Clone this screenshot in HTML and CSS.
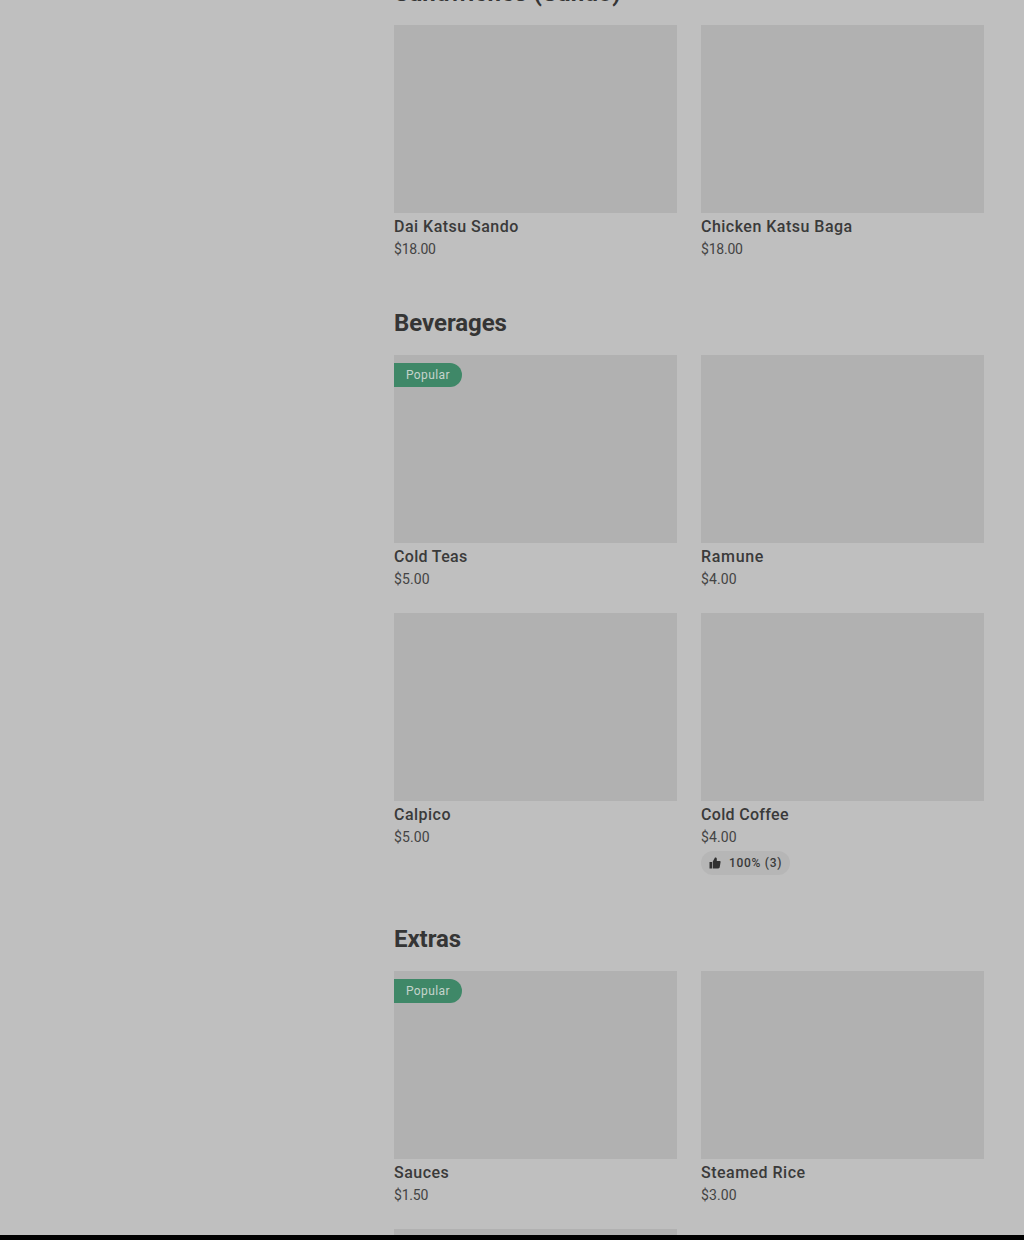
FILE: index.html
```html
<!DOCTYPE html>
<html lang="en">
<head>
<meta charset="utf-8">
<title>Menu</title>
<link rel="stylesheet" href="styles.css">
</head>
<body>
<main class="menu">
  <section class="section section-first">
    <h2 class="heading heading-sandwiches">Sandwiches (Sando)</h2>
    <div class="grid">
      <article class="card"><div class="photo"></div><h3 class="name">Dai Katsu Sando</h3><p class="price price-long">$18.00</p></article>
      <article class="card"><div class="photo"></div><h3 class="name">Chicken Katsu Baga</h3><p class="price price-long">$18.00</p></article>
    </div>
  </section>
  <section class="section">
    <h2 class="heading">Beverages</h2>
    <div class="grid">
      <article class="card"><div class="photo"><span class="popular">Popular</span></div><h3 class="name name-tight">Cold Teas</h3><p class="price">$5.00</p></article>
      <article class="card"><div class="photo"></div><h3 class="name name-wide">Ramune</h3><p class="price">$4.00</p></article>
      <article class="card"><div class="photo"></div><h3 class="name">Calpico</h3><p class="price">$5.00</p></article>
      <article class="card"><div class="photo"></div><h3 class="name name-tight">Cold Coffee</h3><p class="price">$4.00</p>
        <div class="rating"><svg class="thumb" viewBox="0 0 12 12" aria-hidden="true"><path d="M.5 5h2.6v6.5H.5zM3.8 4.6 6 .4h.5c.8 0 1.3.6 1.3 1.3V4h2.8c.7 0 1.1.5 1 1.1l-.9 5.2c-.1.7-.7 1.2-1.4 1.2H3.8z"/></svg><span>100% (3)</span></div>
      </article>
    </div>
  </section>
  <section class="section">
    <h2 class="heading">Extras</h2>
    <div class="grid">
      <article class="card"><div class="photo"><span class="popular">Popular</span></div><h3 class="name">Sauces</h3><p class="price price-long">$1.50</p></article>
      <article class="card"><div class="photo"></div><h3 class="name">Steamed Rice</h3><p class="price">$3.00</p></article>
      <article class="card"><div class="photo"></div></article>
    </div>
  </section>
</main>
<footer class="bottom-bar"></footer>
</body>
</html>
```
FILE: styles.css
```css
* { box-sizing: border-box; }
html { overflow: hidden; }
body {
  margin: 0;
  height: 1240px;
  display: flex;
  flex-direction: column;
  overflow: hidden;
  background: #bfbfbf;
  color: #3a3a3a;
  font-family: Roboto, "Liberation Sans", sans-serif;
}
.menu { flex: 1; min-height: 0; overflow: hidden; padding: 0 40px 0 394px; }
.section { padding-top: 48px; }
.section-first { padding-top: 0; margin-top: -23px; }
.heading {
  margin: 0 0 16px;
  font-size: 24px;
  font-weight: 700;
  line-height: 32px;
  letter-spacing: -.05px;
  color: #353535;
}
.heading-sandwiches { letter-spacing: .35px; }
.grid { display: grid; grid-template-columns: 1fr 1fr; gap: 24px; }
.photo { height: 188px; padding-top: 8px; background: #b1b1b1; }
.name { margin: 0; font-size: 16px; font-weight: 500; line-height: 27px; letter-spacing: .48px; }
.name-tight { letter-spacing: .32px; }
.name-wide { letter-spacing: .68px; }
.price { margin: 0; font-size: 14px; font-weight: 400; line-height: 19px; letter-spacing: .12px; color: #444; }
.price-long { letter-spacing: -.22px; }
.popular {
  display: block;
  width: 68px;
  height: 24px;
  padding-left: 12px;
  border-radius: 0 12px 12px 0;
  background: #3f8868;
  color: #c5d4cc;
  font-size: 12px;
  line-height: 24px;
  letter-spacing: .38px;
}
.rating {
  display: flex;
  align-items: center;
  gap: 8px;
  width: 89px;
  height: 24px;
  margin-top: 4px;
  padding-left: 8px;
  border-radius: 12px;
  background: #b6b6b6;
  font-size: 12px;
  font-weight: 500;
  letter-spacing: .7px;
  white-space: nowrap;
}
.thumb { width: 12px; height: 12px; fill: #303030; }
.bottom-bar { flex: none; height: 5px; background: #000; }
```
